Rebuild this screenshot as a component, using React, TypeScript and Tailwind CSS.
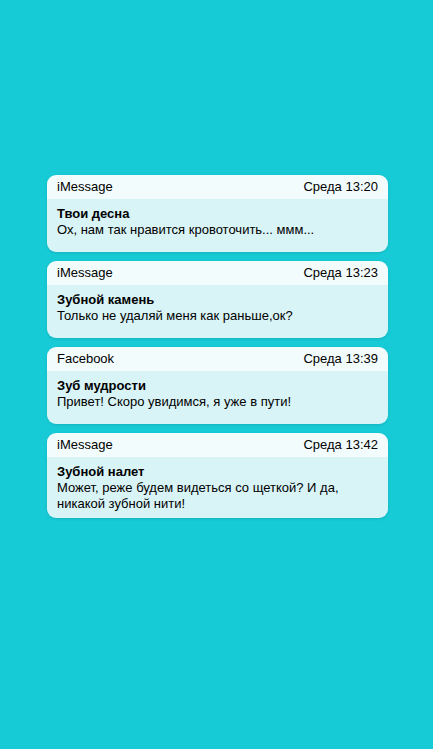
const notes = [
  { app: 'iMessage', time: 'Среда 13:20', title: 'Твои десна', text: 'Ох, нам так нравится кровоточить... ммм...' },
  { app: 'iMessage', time: 'Среда 13:23', title: 'Зубной камень', text: 'Только не удаляй меня как раньше,ок?' },
  { app: 'Facebook', time: 'Среда 13:39', title: 'Зуб мудрости', text: 'Привет! Скоро увидимся, я уже в пути!' },
  { app: 'iMessage', time: 'Среда 13:42', title: 'Зубной налет', text: 'Может, реже будем видеться со щеткой? И да, никакой зубной нити!' },
];

export default function App() {
  return (
    <div
      className="min-h-[749px] w-full bg-[#17cbd6] pl-[47px] pt-[175px] text-black"
      style={{ fontFamily: '"Liberation Sans", Arial, sans-serif' }}
    >
      <div className="flex w-[341px] flex-col gap-[9px]">
        {notes.map((n) => (
          <div key={n.time} className="overflow-hidden rounded-[9px] shadow-[0_1px_3px_rgba(0,0,0,0.12)]">
            <div className="flex h-[24px] items-center justify-between bg-[#f3fcfd] px-[10px] text-[13px]">
              <span>{n.app}</span>
              <span>{n.time}</span>
            </div>
            <div className="min-h-[53px] bg-[#d9f4f7] px-[10px] pt-[7px] pb-[6px] text-[13px] leading-[16px]">
              <div className="font-bold">{n.title}</div>
              <div>{n.text}</div>
            </div>
          </div>
        ))}
      </div>
    </div>
  );
}
